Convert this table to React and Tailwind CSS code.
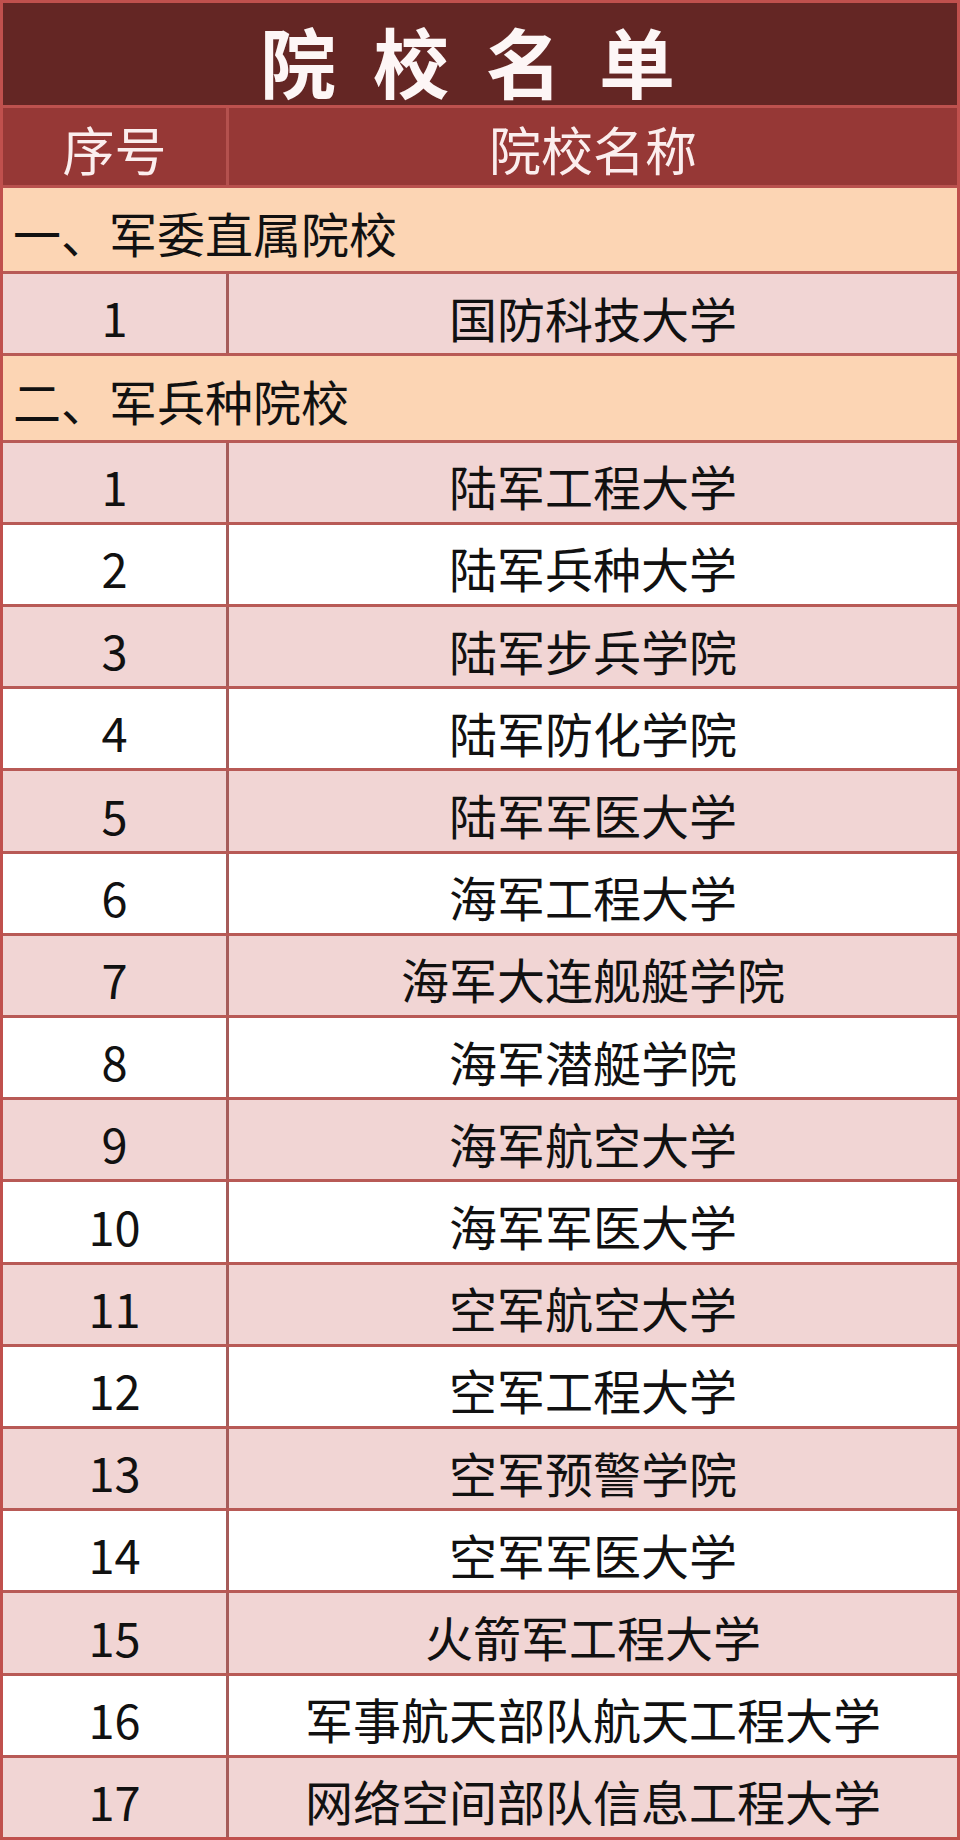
import React from 'react';

// 院校名单 — Excel-style table, accent-red theme
const SECTIONS = [
  { title: '一、军委直属院校', items: ['国防科技大学'] },
  {
    title: '二、军兵种院校',
    items: [
      '陆军工程大学',
      '陆军兵种大学',
      '陆军步兵学院',
      '陆军防化学院',
      '陆军军医大学',
      '海军工程大学',
      '海军大连舰艇学院',
      '海军潜艇学院',
      '海军航空大学',
      '海军军医大学',
      '空军航空大学',
      '空军工程大学',
      '空军预警学院',
      '空军军医大学',
      '火箭军工程大学',
      '军事航天部队航天工程大学',
      '网络空间部队信息工程大学',
    ],
  },
];

function SectionRow({ title }) {
  return (
    <div className="flex-1 min-h-0 flex items-center bg-[#fcd5b4] border-b-[3px] border-[#b85a56] pl-[10px] pt-[4px]">
      <span className="text-[48px] leading-none text-[#111]">{title}</span>
    </div>
  );
}

function ItemRow({ no, name, pink, last }) {
  return (
    <div
      className={`flex-1 min-h-0 flex ${pink ? 'bg-[#f1d5d4]' : 'bg-white'} ${
        last ? '' : 'border-b-[3px] border-[#b85a56]'
      }`}
    >
      <div className="w-[226px] shrink-0 flex items-center justify-center border-r-[3px] border-[#a65c5a] pt-[6px]">
        <span className="text-[47px] leading-none text-[#111]">{no}</span>
      </div>
      <div className="flex-1 flex items-center justify-center pt-[6px]">
        <span className="text-[48px] leading-none text-[#111]">{name}</span>
      </div>
    </div>
  );
}

export default function App() {
  const rows = [];
  SECTIONS.forEach((s, si) => {
    rows.push(<SectionRow key={`s${si}`} title={s.title} />);
    s.items.forEach((name, i) => {
      rows.push(
        <ItemRow
          key={`r${si}-${i}`}
          no={i + 1}
          name={name}
          pink={i % 2 === 0}
          last={si === SECTIONS.length - 1 && i === s.items.length - 1}
        />
      );
    });
  });

  return (
    <div className="w-[960px] h-[1840px] flex flex-col border-[3px] border-[#c0504d] bg-white font-['Noto_Sans_CJK_SC','Noto_Sans',sans-serif]">
      {/* title band */}
      <div className="h-[105px] shrink-0 flex items-center justify-center bg-[#642624] border-b-[3px] border-[#bd514e] pt-[12px]">
        <span className="text-[76px] font-bold leading-none text-[#fdf6f6] tracking-[37px] pl-[12px]">
          院校名单
        </span>
      </div>

      {/* column header */}
      <div className="h-[80px] shrink-0 flex bg-[#963836] border-b-[3px] border-[#b9514e]">
        <div className="w-[226px] shrink-0 flex items-center justify-center border-r-[3px] border-[#b4514e] pt-[4px]">
          <span className="text-[52px] leading-none text-[#fbeeee]">序号</span>
        </div>
        <div className="flex-1 flex items-center justify-center pt-[4px]">
          <span className="text-[52px] leading-none text-[#fbeeee]">院校名称</span>
        </div>
      </div>

      {rows}
    </div>
  );
}
